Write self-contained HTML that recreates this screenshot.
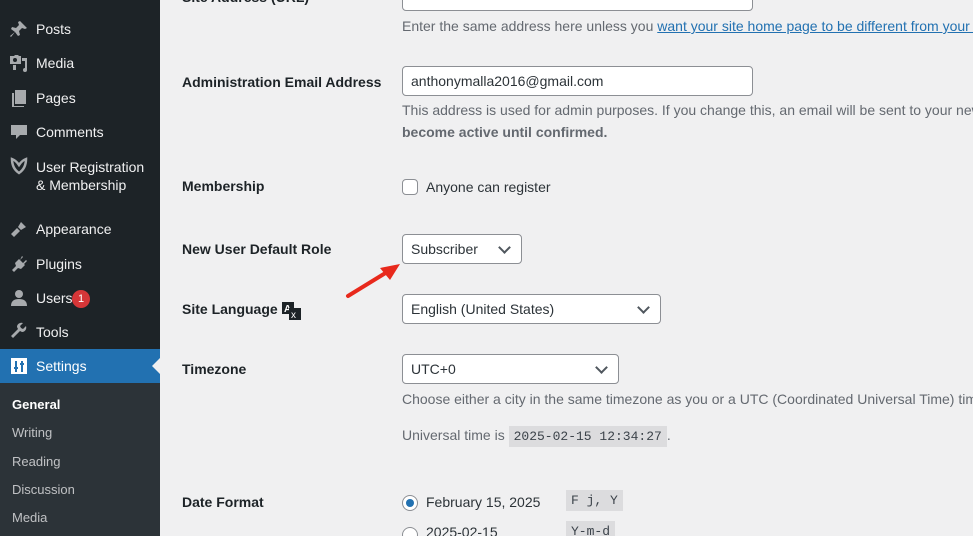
<!DOCTYPE html>
<html><head><style>
*{box-sizing:border-box;margin:0;padding:0}
html,body{width:973px;height:536px;overflow:hidden}
body{background:#f0f0f1;font-family:"Liberation Sans",sans-serif;font-size:14px;color:#3c434a;position:relative}
.a{position:absolute;white-space:nowrap}
#sb{position:absolute;left:0;top:0;width:160px;height:536px;background:#1d2327}
.m{position:absolute;left:36px;color:#f0f0f1;font-size:14px;white-space:nowrap}
.ic{position:absolute;left:9px;width:20px;height:20px}
#set{position:absolute;left:0;top:349px;width:160px;height:34px;background:#2271b1}
#sub{position:absolute;left:0;top:383px;width:160px;height:153px;background:#2c3338}
.s{position:absolute;left:12px;color:rgba(240,240,241,.75);font-size:13px}
.lb{position:absolute;left:182px;font-weight:bold;color:#1d2327;font-size:14px;white-space:nowrap}
.in{position:absolute;background:#fff;border:1px solid #8c8f94;border-radius:4px;white-space:nowrap}
.sel::after{content:"";position:absolute;right:12px;top:8px;width:7px;height:7px;border-right:2px solid #50575e;border-bottom:2px solid #50575e;transform:rotate(45deg)}
.d{position:absolute;left:402px;font-size:14px;color:#646970;white-space:nowrap}
code{font-family:"Liberation Mono",monospace;background:#dcdcde;padding:3px 5px;font-size:13px;color:#3c434a}
</style></head><body>
<div id="sb">
<svg class="ic" style="top:19px" viewBox="0 0 20 20"><path fill="#a7aaad" d="M11 2l7 7-2 1-3-1-3 3 1 4-2 1-3-4-4 5-1-1 5-4-4-3 1-2 4 1 3-3-1-3z"/></svg>
<div class="m" style="top:21px">Posts</div>
<svg class="ic" style="top:53px" viewBox="0 0 20 20"><path fill="#a7aaad" d="M1 3h4l1-1h3l1 1h2v8H1zM6 5a2 2 0 100 4 2 2 0 000-4zM4 12h3v5H4zM13 5h5v12a2 2 0 11-2-2h0V8h-3z"/></svg>
<div class="m" style="top:55px">Media</div>
<svg class="ic" style="top:88px" viewBox="0 0 20 20"><path fill="#a7aaad" d="M6 2h11v14H6zM3 5h2v13h10v1H3z"/></svg>
<div class="m" style="top:90px">Pages</div>
<svg class="ic" style="top:122px" viewBox="0 0 20 20"><path fill="#a7aaad" d="M2 3h16v10h-7l-4 4v-4H2z"/></svg>
<div class="m" style="top:124px">Comments</div>
<svg class="ic" style="top:156px" viewBox="0 0 20 20"><path fill="none" stroke="#a7aaad" stroke-width="2.5" d="M3 3c0 8 4 12 7 14 3-2 7-6 7-14-3 1-5 3-7 6C8 6 6 4 3 3z"/></svg>
<div class="m" style="top:158px;line-height:18px">User Registration<br>&amp; Membership</div>
<svg class="ic" style="top:219px" viewBox="0 0 20 20"><path fill="#a7aaad" d="M12 3l5 5-5 3-3-3zM8 9l3 3-6 6-3-3z"/></svg>
<div class="m" style="top:221px">Appearance</div>
<svg class="ic" style="top:254px" viewBox="0 0 20 20"><path fill="#a7aaad" d="M13 2l1 1-3 3 3 3 3-3 1 1-3 3 1 1-4 4-3-1-4 4-2-2 4-4-1-3 4-4 1 1z"/></svg>
<div class="m" style="top:256px">Plugins</div>
<svg class="ic" style="top:288px" viewBox="0 0 20 20"><circle cx="10" cy="6" r="4" fill="#a7aaad"/><path fill="#a7aaad" d="M2 18c0-5 3-7 8-7s8 2 8 7z"/></svg>
<div class="m" style="top:290px">Users</div>
<div class="a" style="left:72px;top:290px;width:18px;height:18px;border-radius:9px;background:#d63638;color:#fff;font-size:11px;text-align:center;line-height:18px">1</div>
<svg class="ic" style="top:322px" viewBox="0 0 20 20"><path fill="#a7aaad" d="M17 4l-3 3-2-1-1-2 3-3c-3-1-6 1-6 4l1 2-7 7 2 2 7-7 2 1c3 0 5-3 4-6z"/></svg>
<div class="m" style="top:324px">Tools</div>
<div id="set"></div>
<svg class="ic" style="top:356px" viewBox="0 0 20 20"><rect x="2" y="2" width="16" height="16" fill="#fff"/><path stroke="#2271b1" stroke-width="2" d="M7 5v11M13 5v11M5 12h4M11 8h4"/></svg>
<div class="m" style="top:358px;color:#fff">Settings</div>
<div class="a" style="left:144px;top:358px;width:0;height:0;border:8px solid transparent;border-right-color:#f0f0f1"></div>
<div id="sub"></div>
<div class="s" style="top:397px;color:#fff;font-weight:bold">General</div>
<div class="s" style="top:425px">Writing</div>
<div class="s" style="top:454px">Reading</div>
<div class="s" style="top:482px">Discussion</div>
<div class="s" style="top:510px">Media</div>
</div>

<div class="lb" style="top:-11px">Site Address (URL)</div>
<div class="in" style="left:402px;top:-20px;width:351px;height:31px"></div>
<div class="d" style="top:18px">Enter the same address here unless you <span style="color:#2271b1;text-decoration:underline">want your site home page to be different from your WordPress installation address</span></div>

<div class="lb" style="top:74px">Administration Email Address</div>
<div class="in" style="left:402px;top:66px;width:351px;height:30px;padding:6px 8px;color:#2c3338">anthonymalla2016@gmail.com</div>
<div class="d" style="top:102px">This address is used for admin purposes. If you change this, an email will be sent to your new address to confirm it.</div>
<div class="d" style="top:124px;font-weight:bold">become active until confirmed.</div>

<div class="lb" style="top:178px">Membership</div>
<div class="in" style="left:402px;top:179px;width:16px;height:16px"></div>
<div class="a" style="left:426px;top:179px;color:#2c3338">Anyone can register</div>

<div class="lb" style="top:241px">New User Default Role</div>
<div class="in sel" style="left:402px;top:234px;width:120px;height:30px;padding:6px 8px;color:#2c3338">Subscriber</div>
<svg class="a" style="left:340px;top:262px" width="66" height="40"><path d="M8 34L52 7" stroke="#e8291c" stroke-width="4" stroke-linecap="round"/><path d="M60 2L40 6 50 18z" fill="#e8291c"/></svg>

<div class="lb" style="top:301px">Site Language</div>
<svg class="a" style="left:282px;top:302px" width="20" height="18" viewBox="0 0 20 18"><rect x="0" y="0" width="12" height="12" fill="#1d2327"/><text x="2" y="10" font-size="10" fill="#fff" font-weight="bold" font-family="Liberation Sans">A</text><rect x="7" y="6" width="12" height="12" fill="#1d2327"/><text x="9" y="16" font-size="10" fill="#fff" font-family="Liberation Sans">x</text></svg>
<div class="in sel" style="left:402px;top:294px;width:259px;height:30px;padding:6px 8px;color:#2c3338">English (United States)</div>

<div class="lb" style="top:361px">Timezone</div>
<div class="in sel" style="left:402px;top:354px;width:217px;height:30px;padding:6px 8px;color:#2c3338">UTC+0</div>
<div class="d" style="top:391px">Choose either a city in the same timezone as you or a UTC (Coordinated Universal Time) time offset.</div>
<div class="d" style="top:427px">Universal time is <code>2025-02-15 12:34:27</code>.</div>

<div class="lb" style="top:494px">Date Format</div>
<div class="a" style="left:402px;top:495px;width:16px;height:16px;border:1px solid #8c8f94;border-radius:50%;background:#fff"><div style="margin:3px;width:8px;height:8px;border-radius:50%;background:#2271b1"></div></div>
<div class="a" style="left:426px;top:494px;color:#2c3338">February 15, 2025</div>
<div class="a" style="left:566px;top:491px"><code>F j, Y</code></div>
<div class="a" style="left:402px;top:527px;width:16px;height:16px;border:1px solid #8c8f94;border-radius:50%;background:#fff"></div>
<div class="a" style="left:426px;top:524px;color:#2c3338">2025-02-15</div>
<div class="a" style="left:566px;top:522px"><code>Y-m-d</code></div>
</body></html>
